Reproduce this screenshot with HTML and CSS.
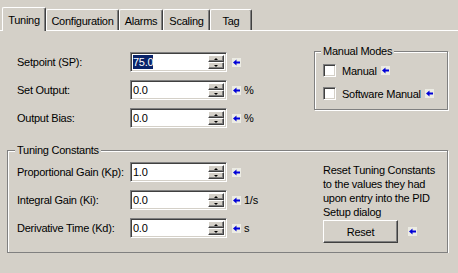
FILE: index.html
```html
<!DOCTYPE html>
<html lang="en">
<head>
    <meta charset="UTF-8">
    <title>PID Setup - Tuning</title>
    <link rel="stylesheet" href="styles.css">
</head>
<body>
    <div class="tabs">
        <div class="tab active w-tuning">Tuning</div>
        <div class="tab w-config">Configuration</div>
        <div class="tab w-alarms">Alarms</div>
        <div class="tab w-scaling">Scaling</div>
        <div class="tab w-tag">Tag</div>
    </div>

    <div class="panel">
        <div class="top">
            <div class="fields">
                <div class="row">
                    <span class="label">Setpoint (SP):</span>
                    <div class="spin">
                        <div class="edit"><span class="sel">75.0</span></div>
                        <div class="buttons"><div class="up"></div><div class="down"></div></div>
                    </div>
                    <svg class="arrow" width="9" height="9" viewBox="0 0 9 9"><rect width="9" height="9" fill="#ecece4"/><path d="M1 4.5 L4.5 1.5 V3.5 H8 V5.5 H4.5 V7.5 Z" fill="#0000d8"/></svg>
                </div>
                <div class="row">
                    <span class="label">Set Output:</span>
                    <div class="spin">
                        <div class="edit">0.0</div>
                        <div class="buttons"><div class="up"></div><div class="down"></div></div>
                    </div>
                    <svg class="arrow" width="9" height="9" viewBox="0 0 9 9"><rect width="9" height="9" fill="#ecece4"/><path d="M1 4.5 L4.5 1.5 V3.5 H8 V5.5 H4.5 V7.5 Z" fill="#0000d8"/></svg>
                    <span class="unit">%</span>
                </div>
                <div class="row">
                    <span class="label">Output Bias:</span>
                    <div class="spin">
                        <div class="edit">0.0</div>
                        <div class="buttons"><div class="up"></div><div class="down"></div></div>
                    </div>
                    <svg class="arrow" width="9" height="9" viewBox="0 0 9 9"><rect width="9" height="9" fill="#ecece4"/><path d="M1 4.5 L4.5 1.5 V3.5 H8 V5.5 H4.5 V7.5 Z" fill="#0000d8"/></svg>
                    <span class="unit">%</span>
                </div>
            </div>

            <fieldset class="group manual">
                <legend>Manual Modes</legend>
                <div class="checks">
                    <div class="check"><span class="box"></span>Manual<svg class="arrow" width="9" height="9" viewBox="0 0 9 9"><rect width="9" height="9" fill="#ecece4"/><path d="M1 4.5 L4.5 1.5 V3.5 H8 V5.5 H4.5 V7.5 Z" fill="#0000d8"/></svg></div>
                    <div class="check"><span class="box"></span>Software Manual<svg class="arrow" width="9" height="9" viewBox="0 0 9 9"><rect width="9" height="9" fill="#ecece4"/><path d="M1 4.5 L4.5 1.5 V3.5 H8 V5.5 H4.5 V7.5 Z" fill="#0000d8"/></svg></div>
                </div>
            </fieldset>
        </div>

        <fieldset class="group constants">
            <legend>Tuning Constants</legend>
            <div class="constants-body">
                <div class="fields">
                    <div class="row">
                        <span class="label">Proportional Gain (Kp):</span>
                        <div class="spin">
                            <div class="edit">1.0</div>
                            <div class="buttons"><div class="up"></div><div class="down"></div></div>
                        </div>
                        <svg class="arrow" width="9" height="9" viewBox="0 0 9 9"><rect width="9" height="9" fill="#ecece4"/><path d="M1 4.5 L4.5 1.5 V3.5 H8 V5.5 H4.5 V7.5 Z" fill="#0000d8"/></svg>
                    </div>
                    <div class="row">
                        <span class="label">Integral Gain (Ki):</span>
                        <div class="spin">
                            <div class="edit">0.0</div>
                            <div class="buttons"><div class="up"></div><div class="down"></div></div>
                        </div>
                        <svg class="arrow" width="9" height="9" viewBox="0 0 9 9"><rect width="9" height="9" fill="#ecece4"/><path d="M1 4.5 L4.5 1.5 V3.5 H8 V5.5 H4.5 V7.5 Z" fill="#0000d8"/></svg>
                        <span class="unit">1/s</span>
                    </div>
                    <div class="row">
                        <span class="label">Derivative Time (Kd):</span>
                        <div class="spin">
                            <div class="edit">0.0</div>
                            <div class="buttons"><div class="up"></div><div class="down"></div></div>
                        </div>
                        <svg class="arrow" width="9" height="9" viewBox="0 0 9 9"><rect width="9" height="9" fill="#ecece4"/><path d="M1 4.5 L4.5 1.5 V3.5 H8 V5.5 H4.5 V7.5 Z" fill="#0000d8"/></svg>
                        <span class="unit">s</span>
                    </div>
                </div>
                <div class="reset">
                    <p>Reset Tuning Constants<br>to the values they had<br>upon entry into the PID<br>Setup dialog</p>
                    <div class="reset-row">
                        <button class="btn">Reset</button>
                        <svg class="arrow" width="9" height="9" viewBox="0 0 9 9"><rect width="9" height="9" fill="#ecece4"/><path d="M1 4.5 L4.5 1.5 V3.5 H8 V5.5 H4.5 V7.5 Z" fill="#0000d8"/></svg>
                    </div>
                </div>
            </div>
        </fieldset>
    </div>
</body>
</html>
```

FILE: styles.css
```css
/* Win2000 style dialog */
body {
    margin: 0;
    background-color: #d4d0c8;
    font-family: "Liberation Sans", Arial, sans-serif;
    font-size: 11px;
    letter-spacing: -0.25px;
    color: #000;
    overflow: hidden;
}

/* tab strip */
.tabs {
    display: flex;
    align-items: flex-end;
    padding: 7px 0 0 2px;
    height: 23px;
}
.tab {
    box-sizing: border-box;
    height: 21px;
    border-top: 1px solid #fff;
    border-left: 1px solid #fff;
    border-right: 1px solid #404040;
    border-radius: 2px 2px 0 0;
    box-shadow: inset -1px 0 0 #808080;
    text-align: center;
    line-height: 22px;
}
.tab.active {
    height: 24px;
    margin-bottom: -1px;
    line-height: 25px;
    position: relative;
    z-index: 1;
    background-color: #d4d0c8;
}
.w-tuning { width: 44px; }
.w-config { width: 73px; }
.w-alarms { width: 44px; }
.w-scaling { width: 47px; }
.w-tag { width: 42px; }

.panel {
    border-top: 1px solid #fff;
}

.top {
    display: flex;
    align-items: flex-start;
}
.fields {
    display: flex;
    flex-direction: column;
    gap: 8px;
}
.top .fields {
    padding: 21px 0 0 17px;
}
.row {
    display: flex;
    align-items: center;
    height: 20px;
}
.label {
    width: 113px;
    flex: none;
}

/* spin edit */
.spin {
    box-sizing: border-box;
    display: flex;
    width: 97px;
    height: 20px;
    background-color: #fff;
    border-top: 1px solid #808080;
    border-left: 1px solid #808080;
    border-right: 1px solid #fff;
    border-bottom: 1px solid #fff;
    box-shadow: inset 1px 1px 0 #404040, inset -1px -1px 0 #d4d0c8;
    padding: 2px;
}
.edit {
    flex: 1;
    line-height: 14px;
    padding-left: 0;
}
.sel {
    background-color: #0a246a;
    color: #fff;
    display: inline-block;
    line-height: 14px;
}
.buttons {
    width: 16px;
    display: flex;
    flex-direction: column;
}
.up, .down {
    box-sizing: border-box;
    flex: 1;
    background-color: #d4d0c8;
    border-top: 1px solid #fff;
    border-left: 1px solid #fff;
    border-right: 1px solid #404040;
    border-bottom: 1px solid #404040;
    box-shadow: inset -1px -1px 0 #808080;
    display: flex;
    align-items: center;
    justify-content: center;
}
.up::after {
    content: "";
    border-left: 2px solid transparent;
    border-right: 2px solid transparent;
    border-bottom: 2px solid #000;
    margin-right: 1px;
}
.down::after {
    content: "";
    border-left: 2px solid transparent;
    border-right: 2px solid transparent;
    border-top: 2px solid #000;
    margin-right: 1px;
}

.arrow {
    flex: none;
    margin-left: 5px;
}
.unit {
    margin-left: 3px;
}

/* group boxes */
.group {
    margin: 0;
    border: 1px solid #808080;
    box-shadow: 1px 1px 0 #fff, inset 1px 1px 0 #fff;
    min-width: 0;
}
.group legend {
    padding: 0 2px;
    margin-left: -2px;
    line-height: 12px;
    background-color: #d4d0c8;
}

.manual {
    box-sizing: border-box;
    width: 134px;
    margin: 14px 10px 0 auto;
    padding: 7px 8px 9px 8px;
}
.checks {
    display: flex;
    flex-direction: column;
    gap: 10px;
}
.check {
    display: flex;
    align-items: center;
    height: 13px;
}
.box {
    box-sizing: border-box;
    width: 13px;
    height: 13px;
    margin-right: 6px;
    background-color: #fff;
    border-top: 1px solid #808080;
    border-left: 1px solid #808080;
    border-right: 1px solid #fff;
    border-bottom: 1px solid #fff;
    box-shadow: inset 1px 1px 0 #404040, inset -1px -1px 0 #d4d0c8;
}
.check .arrow {
    margin-left: 4px;
}

.constants {
    margin: 16px 10px 0 7px;
    padding: 6px 9px 9px 9px;
}
.constants-body {
    display: flex;
}
.constants .fields {
    width: 306px;
}
.reset p {
    margin: 0;
    padding-top: 1px;
    line-height: 14px;
}
.reset-row {
    display: flex;
    align-items: center;
    margin-top: 1px;
}
.btn {
    box-sizing: border-box;
    width: 75px;
    height: 23px;
    padding: 0;
    font: inherit;
    letter-spacing: inherit;
    color: #000;
    background-color: #d4d0c8;
    border-top: 1px solid #fff;
    border-left: 1px solid #fff;
    border-right: 1px solid #404040;
    border-bottom: 1px solid #404040;
    box-shadow: inset -1px -1px 0 #808080;
}
.reset-row .arrow {
    margin-left: 10px;
}
```
